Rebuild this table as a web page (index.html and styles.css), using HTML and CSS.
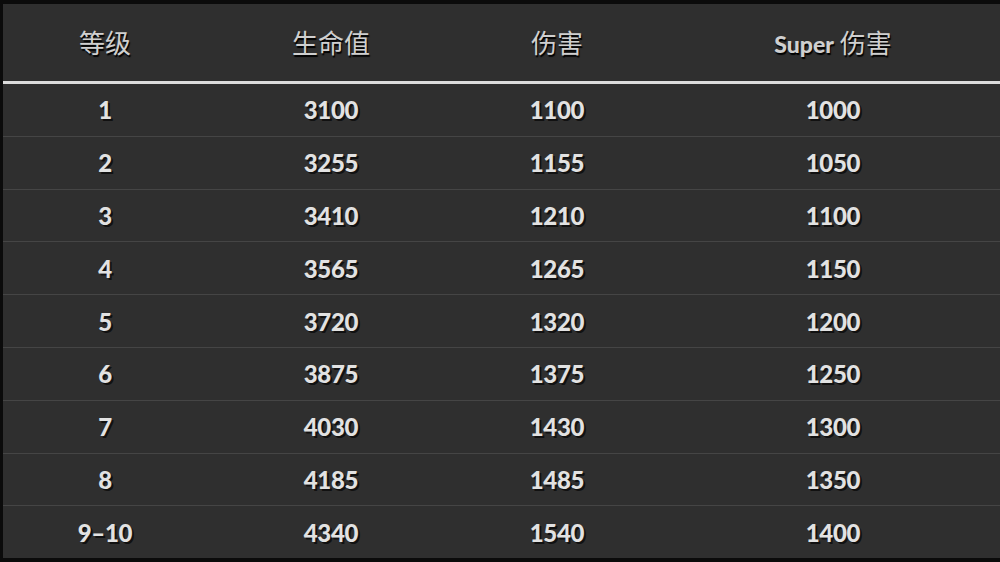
FILE: index.html
```html
<!DOCTYPE html>
<html lang="zh">
<head>
<meta charset="utf-8">
<link rel="stylesheet" href="styles.css">
</head>
<body>
<div class="frame">
  <table class="stats">
    <thead>
      <tr><th>等级</th><th>生命值</th><th>伤害</th><th><span class="latin">Super</span> 伤害</th></tr>
    </thead>
    <tbody>
      <tr><td>1</td><td>3100</td><td>1100</td><td>1000</td></tr>
      <tr><td>2</td><td>3255</td><td>1155</td><td>1050</td></tr>
      <tr><td>3</td><td>3410</td><td>1210</td><td>1100</td></tr>
      <tr><td>4</td><td>3565</td><td>1265</td><td>1150</td></tr>
      <tr><td>5</td><td>3720</td><td>1320</td><td>1200</td></tr>
      <tr><td>6</td><td>3875</td><td>1375</td><td>1250</td></tr>
      <tr><td>7</td><td>4030</td><td>1430</td><td>1300</td></tr>
      <tr><td>8</td><td>4185</td><td>1485</td><td>1350</td></tr>
      <tr><td>9–10</td><td>4340</td><td>1540</td><td>1400</td></tr>
    </tbody>
  </table>
</div>
</body>
</html>
```

FILE: styles.css
```css
html, body {
  margin: 0;
  padding: 0;
  background: #0b0b0b;
  overflow: hidden;
  width: 1000px;
  height: 562px;
}
.frame {
  padding: 4px 0 4px 3px;
  width: 1010px;
}
.stats {
  border-collapse: collapse;
  table-layout: fixed;
  width: 1004px;
  background: #2f2f2f;
}
.stats th:nth-child(1), .stats td:nth-child(1) { width: 204px; }
.stats th:nth-child(2), .stats td:nth-child(2) { width: 248px; }
.stats th:nth-child(3), .stats td:nth-child(3) { width: 204px; }
.stats th:nth-child(4), .stats td:nth-child(4) { width: 348px; }
.stats th {
  height: 75px;
  padding: 0 0 2px;
  border-bottom: 3px solid #dcdcdc;
  font-family: "Noto Sans CJK SC", "Noto Sans", sans-serif;
  font-weight: 400;
  font-size: 26px;
  color: #cfcfcf;
  text-align: center;
  vertical-align: middle;
  text-shadow: 1px 2px 1px #000;
}
.stats th .latin {
  font-family: "Lato", "Noto Sans", sans-serif;
  font-weight: 900;
  font-size: 23px;
}
.stats td {
  height: 51.8px;
  padding: 0;
  border-top: 1px solid #454545;
  font-family: "Lato", "Noto Sans", sans-serif;
  font-weight: 900;
  font-size: 24px;
  letter-spacing: -0.3px;
  color: #e2e2e2;
  text-align: center;
  vertical-align: middle;
  text-shadow: 2px 2px 0 #111;
}
.stats tbody tr:first-child td { border-top: none; }
```
